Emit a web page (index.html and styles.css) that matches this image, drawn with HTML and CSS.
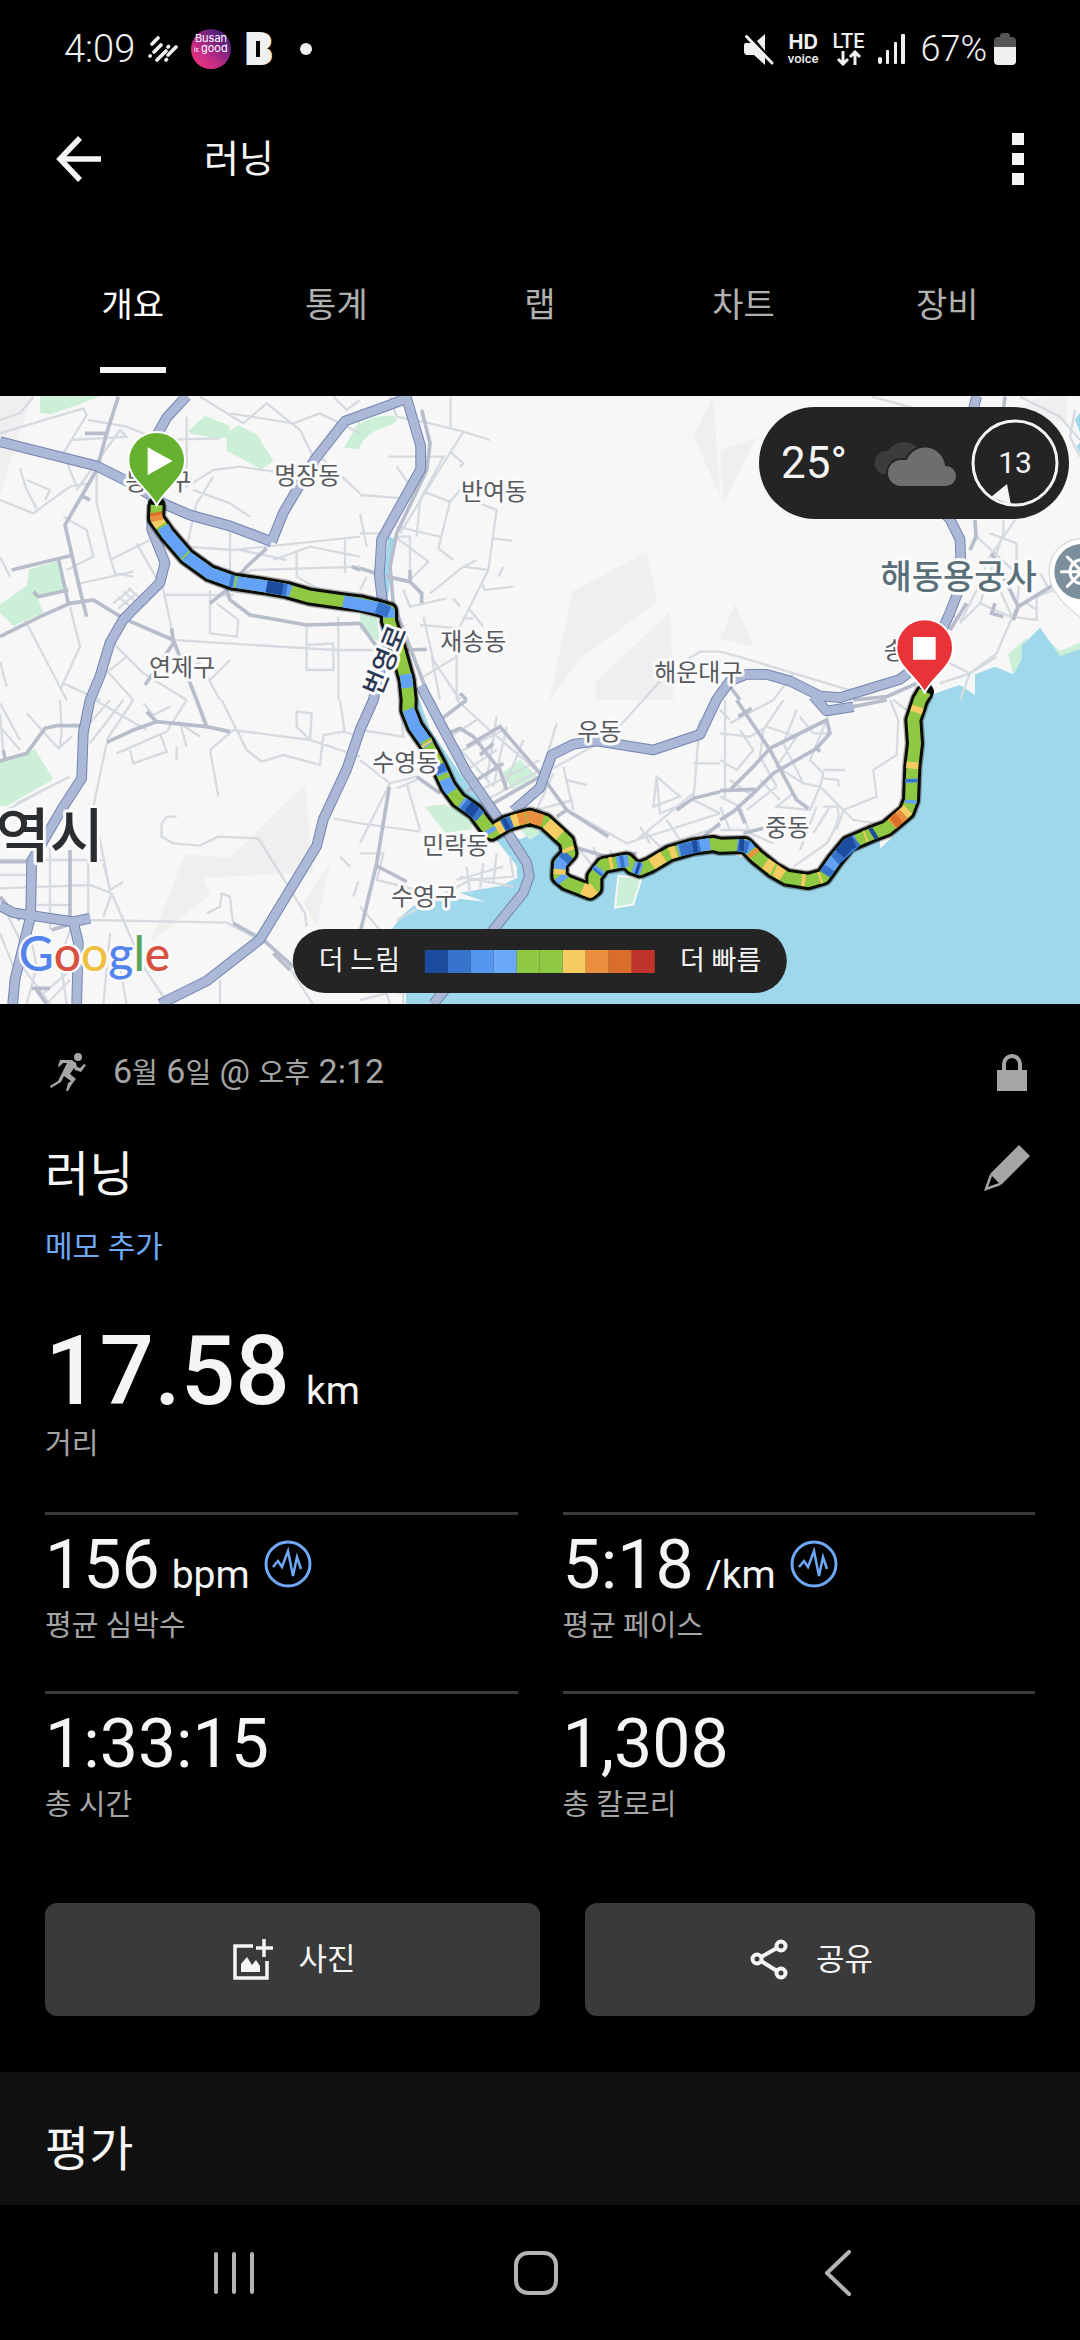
FILE: index.html
```html
<!DOCTYPE html>
<html lang="ko">
<head>
<meta charset="utf-8">
<meta name="viewport" content="width=device-width, initial-scale=1">
<title>러닝</title>
<link rel="stylesheet" href="styles.css">
</head>
<body>
<div class="status">
  <div class="status-side status-left">
    <span class="clock">4:09</span>
    <svg class="ic-dashes" viewBox="0 0 30 26" fill="none" stroke="#f0f0f0" stroke-width="3.6" stroke-linecap="round"><path d="M4 8L10 2M6 16L13 9M2 20L2.2 19.8M9 24L18 15M20 11L20.500 10.500M18 24L18.500 23.500M20 19L28 11"/></svg>
    <svg class="ic-busan" viewBox="0 0 40 40">
      <defs><linearGradient id="busan" x1="0.15" y1="0.85" x2="0.75" y2="0.2"><stop offset="0" stop-color="#ea3483"/><stop offset="0.4" stop-color="#bd2a83"/><stop offset="1" stop-color="#57207d"/></linearGradient></defs>
      <circle cx="20" cy="20" r="20" fill="url(#busan)"/>
      <text x="20" y="13" class="busan-text" text-anchor="middle">Busan</text>
      <text x="3" y="23" class="busan-small">is</text>
      <text x="10" y="23" class="busan-text">good</text>
    </svg>
    <svg class="ic-b" viewBox="0 0 32 38"><text x="0" y="35" class="b-text">B</text><rect x="7" y="5" width="14" height="27" fill="#f0f0f0"/><rect x="12" y="11" width="4" height="16" fill="#000"/></svg>
    <span class="dot"></span>
  </div>
  <div class="status-side">
    <svg class="ic-mute" viewBox="0 0 30 31" fill="#f0f0f0"><path d="M13 7L21 0V17ZM1 9H8L21 22V31L10 21H3Q0 21 0 17V11Z"/><path d="M2.500 2.500L28 29" stroke="#f0f0f0" stroke-width="3" stroke-linecap="round"/></svg>
    <span class="hd"><b>HD</b><small>voice</small></span>
    <span class="lte">LTE<svg viewBox="0 0 26 16" fill="none" stroke="#f0f0f0" stroke-width="3"><path d="M7 1V13M2 9L7 14L12 9M19 15V3M14 7L19 2L24 7"/></svg></span>
    <svg class="ic-signal" viewBox="0 0 28 31" fill="#f0f0f0"><rect x="0" y="23" width="4" height="7" rx="2"/><rect x="8" y="16" width="3" height="14" rx="1"/><rect x="16" y="8" width="3" height="22" rx="1"/><rect x="23" y="0" width="4" height="30" rx="1"/></svg>
    <span class="clock battery-level">67%</span>
    <svg class="ic-battery" viewBox="0 0 22 32"><path d="M6 3Q6 0 9 0H13Q16 0 16 3V4H19Q22 5 22 8V15H0V8Q0 5 3 4H6Z" fill="#555"/><path d="M0 14H22V28Q22 32 18 32H4Q0 32 0 28Z" fill="#f0f0f0"/></svg>
  </div>
</div>

<header class="appbar">
  <button class="icon-btn" aria-label="뒤로"><svg class="ic-back" viewBox="0 0 46 46" fill="none" stroke="#f5f5f5" stroke-width="5.500"><path d="M45 23H5M24 2L4 23L24 44"/></svg></button>
  <h1>러닝</h1>
  <button class="icon-btn" aria-label="더보기"><svg class="ic-more" viewBox="0 0 12 52" fill="#f5f5f5"><path d="M0 0H12V12H0ZM0 20H12V32H0ZM0 40H12V52H0Z"/></svg></button>
</header>

<nav class="tabs">
  <a class="tab active" href="#overview">개요</a>
  <a class="tab" href="#stats">통계</a>
  <a class="tab" href="#laps">랩</a>
  <a class="tab" href="#charts">차트</a>
  <a class="tab" href="#gear">장비</a>
</nav>

<main id="overview">
<section class="map">
<svg class="map-canvas" viewBox="0 0 3240 1824" preserveAspectRatio="xMidYMid slice">
  <defs>
    <g id="highways" fill="none" stroke-linejoin="round">
      <path d="M0 137L290 210L380 255L500 327L570 357L690 390L815 437M560 0L500 65L475 110L460 300L455 400L495 500L480 560L370 670L330 740L300 840L270 912L250 1010L245 1147L185 1240L95 1395L92 1560L45 1750L38 1824M815 437L850 350L945 190L1035 75L1160 30L1225 5"/>
      <path d="M1218 0L1262 150L1262 220L1145 430L1138 540L1150 640M1262 870L1320 980L1400 1130L1500 1275L1580 1400L1588 1440L1570 1490L1300 1824"/>
      <path d="M1540 1245L1620 1175L1655 1077L1720 1045L1790 1035L1960 1062L2100 1015L2150 910L2190 855L2240 835L2300 835L2370 855L2460 900L2520 905L2700 850L2790 780L2850 650L2885 560L2880 430L2850 370L2800 320M2930 0L2910 80"/>
      <path d="M1185 690L1150 780L1120 912L1080 1002L1040 1120L970 1270L950 1350L780 1630L620 1755L480 1824M0 1530L40 1550L220 1577L270 1567M220 1577L235 1640L230 1824M2440 900L2480 945L2560 932"/>
    </g>
    <path id="route" d="M470 327L468 367L500 412L560 482L630 532L700 557L790 570L860 582L930 602L1030 616L1080 622L1140 637L1167 645L1167 675L1195 762L1220 852L1226 912L1225 942L1245 992L1280 1042L1315 1107L1345 1172L1375 1212L1425 1247L1455 1287L1475 1310L1520 1282L1590 1262L1635 1277L1700 1337L1708 1372L1680 1402L1678 1442L1700 1460L1770 1487L1783 1477L1783 1442L1810 1407L1880 1394L1898 1412L1920 1420L1950 1407L2010 1372L2080 1352L2140 1344L2160 1349L2235 1347L2270 1382L2320 1422L2360 1445L2425 1455L2470 1442L2505 1392L2545 1344L2620 1312L2660 1297L2720 1247L2733 1212L2737 1112L2745 1042L2740 972L2760 912L2775 887"/>
  </defs>
  <rect width="3240" height="1824" fill="#f7f7f7"/>
  <!-- hills -->
  <g fill="#efefef">
    <path d="M1718 586L1940 468L1972 618L1740 788L1650 912H1648ZM1785 860L2010 648L2020 912H1790ZM2140 0L2080 118L2160 300ZM2160 162L2270 125L2170 325ZM2205 625L2262 750L2160 730ZM3040 40L3130 0H3200V80ZM0 0H100L60 100L0 300Z"/>
    <path d="M450 1640L555 1375L690 1385L915 1165L940 1430L610 1445L630 1495ZM990 1400L910 1520L950 1590Z"/>
  </g>
  <!-- parks -->
  <g fill="#ccefd8">
    <path d="M120 0H300L240 25L150 55L120 50ZM565 105L615 60L690 90L680 125L640 125L570 112ZM680 110L715 88L770 115L820 195L785 220L680 165ZM1032 155L1080 70V160ZM88 520L175 495L190 580L110 600L130 650L40 690L0 650L0 625L80 570ZM1080 85Q1120 55 1180 60Q1210 75 1150 95Q1100 110 1080 150Z"/>
    <path d="M0 1095L105 1060L160 1150L20 1230H0ZM1275 1232L1330 1225L1415 1260V1300L1335 1310ZM1508 1130L1560 1092L1610 1140L1535 1180ZM1080 655L1130 665L1140 740L1080 700ZM3024 775L3080 725L3100 790L3040 838ZM3110 700L3180 765L3240 740V790L3180 785Z"/>
  </g>
  <!-- sea and river -->
  <g fill="#a0d8eb">
    <path d="M3240 760L3180 780L3120 695L3065 750V790L3040 835L2985 812L2925 835V897L2880 867L2810 890L2770 915L2745 1000L2735 1240L2680 1320L2640 1358V1325L2560 1360L2470 1460L2350 1460L2235 1385L2140 1360L2060 1370L1950 1420L1870 1410L1820 1400L1790 1450L1770 1495L1680 1460L1680 1400L1700 1350L1630 1300L1560 1330L1500 1300L1480 1320L1550 1410L1552 1445L1500 1470L1380 1490L1455 1517L1350 1505L1260 1515L1210 1555L1175 1600L1218 1720V1824H3240Z"/>
    <path d="M1165 420L1185 430L1172 540L1160 640L1150 560ZM1240 860L1290 1000L1400 1160L1500 1290L1480 1320L1400 1230L1330 1130L1280 1010L1240 930ZM3225 70L3240 50V110ZM3230 150L3240 140V170Z"/>
  </g>
  <path d="M1855 1440L1925 1445L1900 1525L1845 1535Z" fill="#ccefd8" stroke="#f7f7f7" stroke-width="6"/>
  <path d="M1560 1300L1600 1290L1620 1312L1590 1332Z" fill="#ccefd8"/>
  <!-- side streets -->
  <g class="minor">
    <g transform="translate(0 -18)">
      <path d="M0 90L60 70L100 20M0 130L250 55L260 75L190 190L230 290M215 150L380 140L360 120L230 300M265 90L380 110L480 150L660 145M290 245L290 340L330 500L345 550L400 560M60 235L80 300L110 355M0 330L100 370L210 290L270 280M135 330L150 300L80 270M560 80V290L640 240L720 230L820 245M690 70L880 100L960 70L1080 130M600 20L730 100L800 40L900 120L960 240M1000 20L1040 60L1080 30M640 260L590 340L560 470L700 480L1080 440M750 380L690 340L580 300M690 420V560L760 540L1080 530M820 510L930 470L1080 500M960 200L1080 310M720 480L860 510M330 510L450 450M410 460L490 600L520 740M240 580L400 545M495 615H700M0 500L30 560M75 690L200 930M210 650L240 770L180 900M190 880L300 930M340 760L430 850L560 930M310 830L400 930M280 880L380 800M520 750L1000 780H1080M630 600V730L710 740L715 690L650 640M920 710V840H1000V760L925 765M1015 680V930M0 815L20 890M630 870L690 810M890 480V560L960 600M1035 450V550"/>
      <path d="M355 620L410 665M370 605L425 650M385 595L440 640M340 640L395 595M355 655L410 610M370 670L425 625M520 840L600 820L660 930M190 380L260 420L280 500L200 540"/>
    </g>
    <g transform="translate(1080 -18)">
      <path d="M90 20L110 80L210 100L310 125L390 150M272 20V110M310 125L200 300L120 430M270 185L310 220L300 230M85 200H250L180 330L170 440M110 230L160 300M0 315L130 325M190 305L270 335L235 475L280 510M270 335L300 300M110 410L240 440M100 440H150V550M105 440L205 515L150 570M210 610L310 530L350 510M310 530L385 540L410 360L360 340M400 445L455 452M385 540L300 710M365 580L375 600L460 590M430 530L415 560M130 600L150 650L260 625M280 625L300 650M330 660L370 710M305 685H340M180 705L300 715M0 370L20 470M0 430H60M190 680L220 810L300 930M190 860L290 800M0 780H60M215 800L240 930M290 790V930M0 600L20 560"/>
      <path d="M850 930L930 840L1020 785L1080 785"/>
    </g>
    <g transform="translate(2160 -18)">
      <path d="M455 20L640 70L760 90M900 20L1020 80L1080 150M1065 60L1050 140L1080 200M850 390V430L780 640L730 690L700 680M810 430L890 460L890 520M770 440L900 560L890 650M885 390L810 500L770 600L720 700M780 640L870 680L950 690V620L1080 570M890 650L830 790L750 850L720 930M660 880L750 850L830 800M690 820L750 850M0 785L40 795L420 910M220 850L160 930M960 550L990 600M840 600L880 690M920 640L950 660"/>
    </g>
    <g transform="translate(0 912)">
      <path d="M180 0L185 90L180 145M80 40L175 145L215 110M0 40L10 160M0 80L60 150M285 0L440 90M400 0L320 120M370 0L270 130M330 0L260 80M430 10L460 45L510 20M320 130L280 320L330 570M350 160L500 95L560 0M390 150L400 190L500 155L480 100M530 180V140M560 140L540 70L600 110M700 90L930 120L1080 170M665 0L740 150L785 185L850 165L960 195L970 105L1030 95L1080 110M930 120L935 40L890 35V80L930 120M1020 0L1035 100M655 290L630 150L700 90M530 350H500L485 370V410L520 430L600 437L655 410L775 415L915 640L920 680M1000 355L1080 370M0 480H310M0 525H90M0 565L270 555L335 580L310 650M150 440V690M110 615H210M265 480V650M310 490L330 570L370 545M335 580L430 800L490 890M270 660L680 668L780 720M665 580L660 620L620 640M665 580L690 590L695 640L700 670M860 790L950 930M660 840V930M0 600L60 720M0 700L40 800M90 700L110 800L80 912M330 700L310 912M360 800L380 912M60 790L150 912M130 880L200 820M140 912L210 840M1020 470L1050 500M1075 545L1060 590M0 10L60 120M210 230L50 310M150 260L20 330M210 690L180 780L200 912"/>
    </g>
    <g transform="translate(1080 912)">
      <path d="M0 90L130 110L120 0M0 180L90 250L170 230M90 250L0 430M110 265L170 240M0 370L180 395M140 250L180 390M0 460H70L50 540L170 570M60 690L0 620M110 660L330 540L460 530L450 470M290 540L430 500M330 580L320 500M360 570L370 490M400 550L410 460M300 530L460 560M200 20L260 100L390 250M290 0L400 100L540 220M270 110L350 60M290 160L430 90M320 210L410 150M360 270L540 180M380 300L540 210M410 50L380 240M440 80L400 260M490 120L430 270M590 70L560 170M850 0L750 110L580 205M610 200L640 330M680 255L620 240M580 220L530 330L640 300M890 230L960 290L880 320ZM890 230L900 340L1000 300M1020 60L1000 300L1080 340M1000 190H1080M640 340L800 430L1080 340M830 420L1000 280M660 450L700 500L800 480M700 440L720 500M750 450L770 500M860 400L900 440L1080 380M840 380L870 430M920 360L960 420"/>
      <path d="M0 900L80 880L90 912M20 860L130 880V912"/>
    </g>
    <g transform="translate(2160 912)">
      <path d="M0 100L90 110L140 80L230 110L170 200L250 250L300 260L270 330L170 320L220 280M15 0V300M30 70L160 0M190 0L130 90L120 170L170 260M230 30L190 130L250 250M60 90L100 150L50 210L0 180M0 30L30 60M240 50L280 100H330M320 60L270 180L310 220L300 260L370 330L350 390M310 210H375M310 235L355 240V260M370 330L470 290L460 210L530 165L535 60L510 0M370 330L400 360L500 375M120 240L180 300M0 290L60 320L90 400L160 430M30 240L100 290M0 320L30 390M290 320L240 450M330 320L280 400M350 320Q370 350 320 430L220 500M310 320H360M170 260L80 330M520 0L560 30M0 390L80 390"/>
    </g>
  </g>
  <!-- arterial roads -->
  <g class="arterial">
    <g transform="translate(0 -18)"><path d="M355 20L320 130L290 240L195 405L240 600L260 680M255 130H325M0 740L120 680L210 640L280 630L370 685L520 750L590 930M35 540L220 495M175 505L205 640M100 605L115 620L205 600M800 475L740 530L680 600L630 640M680 600L690 630L750 675L920 705L1080 700M435 885L520 760L515 715M1055 530L1080 540M250 320L270 330"/></g>
    <g transform="translate(1080 -18)"><path d="M185 60L210 160L200 240L110 430L90 530L100 640L210 930M0 535L80 560L150 575L185 610V640M150 540V575M0 700L50 770M140 780L200 778M300 910L320 930"/></g>
    <g transform="translate(2160 -18)"><path d="M855 20L850 60M765 390L768 440L750 480M815 490L895 650L1000 585M895 650L880 690M825 640L815 670L850 680M740 640L690 720M590 880L500 920L400 930M30 890L60 930M1080 550L1000 585"/></g>
    <g transform="translate(0 912)"><path d="M0 183L80 160L135 85L170 77H250M320 127L400 90L470 65L620 80L690 95M590 0L620 80M440 35L470 65M10 150L15 175M0 485H80M210 450V650M700 670L790 720L880 800M0 590L60 660M155 690L220 670M95 865H150M110 870L140 912M820 760L870 810M50 420L60 440"/></g>
    <g transform="translate(1080 912)"><path d="M0 700L50 490L88 260M45 495L140 545M170 230L240 280M240 60L320 0M265 100L300 85L340 110L420 210L440 270M320 140L420 80L540 220L620 330L745 410M360 165L400 130M350 240L430 190M320 275L350 255M400 310L540 230M620 330L590 350M640 440L740 470L830 460M950 330L1000 295L1080 275M1030 410L1080 370"/></g>
    <g transform="translate(2160 912)"><path d="M50 0L150 150L230 300L265 325M0 360L40 335L100 280L160 220L290 145L330 100L320 60L150 145L100 200L30 270M0 272L105 268M55 50L95 25M55 325L75 370M300 155L290 145M400 20L500 0M70 400L130 385"/></g>
  </g>
  <use href="#highways" class="highway-edge"/>
  <use href="#highways" class="highway"/>
  <!-- route, coloured by pace -->
  <use href="#route" class="route-halo"/>
  <use href="#route" class="route-edge"/>
  <use href="#route" class="route"/>
  <g class="pace">
    <path class="c-mid" d="M489 392L500 412L560 482L630 532L700 557L790 570L860 582L872 586M1030 616L1140 637L1167 648V665M1217 835L1222 875M1225 940L1245 992L1285 1048M1315 1107L1345 1172L1355 1187M1385 1218L1425 1247L1440 1262M1468 1298L1475 1310M1508 1290L1535 1276M1702 1378L1682 1402L1679 1420M1678 1440L1690 1455M1790 1430L1800 1417M1850 1399L1885 1394M1900 1412L1925 1420M2035 1364L2080 1352L2130 1344M2212 1347L2240 1350L2252 1364M2480 1428L2505 1392L2545 1344L2570 1334M2735 1160L2734 1148M2732 1222L2733 1212"/>
    <path class="c-deep" d="M700 557L690 555M860 582L848 580M1130 634L1167 648M1315 1107L1325 1130M1392 1223L1440 1262M1508 1290L1535 1276M1705 1375L1690 1392M1790 1430L1795 1424M1860 1397L1872 1395M2040 1363L2100 1350M2215 1347L2245 1355M2475 1435L2488 1415M2505 1392L2570 1334M2735 1159V1149"/>
    <path class="c-navy" d="M800 571L848 580M1404 1231L1428 1249M1512 1287L1524 1281M1909 1416L1918 1419M2078 1352L2092 1350M2218 1347L2232 1347M2520 1374L2545 1344L2562 1337M2615 1316L2626 1309"/>
    <path class="c-yellow" d="M468 367L482 388M1278 1040L1282 1046M1490 1300L1508 1290M1536 1276L1555 1270M1640 1282L1680 1318M1702 1355L1707 1366M1679 1420L1678 1435M1748 1478L1770 1487L1783 1477M1828 1402L1838 1400M1955 1405L1990 1382M2010 1372L2028 1366M2296 1402L2348 1438M2405 1452L2416 1453M2458 1446L2464 1444M2594 1322L2599 1320M2676 1284L2724 1240M2748 950L2754 932M2736 1118L2738 1098"/>
    <path class="c-orange" d="M468 355L472 374M1555 1270L1590 1262L1628 1274M2676 1284L2712 1254M2256 1366L2264 1376"/>
    <path class="c-red" d="M467 349L469 358M2680 1280L2698 1266"/>
    <path class="c-green" d="M554 476L558 480M704 557L710 558M1578 1265L1581 1264M1277 1032L1280 1038M1328 1135L1334 1150M2318 1421L2324 1424M1810 1407L1820 1404M2770 898L2775 887"/>
  </g>
  <!-- place names -->
  <g class="place" text-anchor="middle">
    <text x="475" y="283">동래구</text><text x="922" y="263">명장동</text><text x="546" y="840">연제구</text>
    <text x="1482" y="312">반여동</text><text x="1420" y="763">재송동</text><text x="2095" y="856">해운대구</text>
    <text x="2750" y="789">송정동</text><text x="1216" y="1126">수영동</text><text x="1366" y="1375">민락동</text>
    <text x="1272" y="1528">수영구</text><text x="1798" y="1033">우동</text><text x="2362" y="1321">중동</text>
  </g>
  <text class="city" x="312" y="1382" text-anchor="end">역시</text>
  <text class="landmark" x="2876" y="580" text-anchor="middle">해동용궁사</text>
  <text class="road-name" x="1190" y="838" text-anchor="middle" transform="rotate(-68 1160 828)">번영로</text>
  <text class="logo" x="56" y="1724"><tspan fill="#5383ec">G</tspan><tspan fill="#d85140">o</tspan><tspan fill="#f1bf42">o</tspan><tspan fill="#5383ec">g</tspan><tspan fill="#58a55c">l</tspan><tspan fill="#d85140">e</tspan></text>
  <!-- temple marker -->
  <g transform="translate(3246 527)">
    <path d="M-99 0A99 99 0 0 1 99 0Q99 70 0 140Q-99 70 -99 0Z" fill="#fff" stroke="#d9dcde" stroke-width="4"/>
    <circle r="83" fill="#7b909c"/>
    <g fill="none" stroke="#fff" stroke-width="9"><circle r="36"/><circle r="11"/><path d="M-62 0H62M0 -62V62M-44 -44L44 44M44 -44L-44 44" stroke-linecap="round"/></g>
  </g>
  <!-- start and finish pins -->
  <g stroke="#fff" stroke-width="6">
    <path d="M470 328C442 275 385 250 385 193A85 85 0 0 1 555 193C555 250 498 275 470 328Z" fill="#67b131"/>
    <path d="M2774 890C2746 837 2689 812 2689 755A85 85 0 0 1 2859 755C2859 812 2802 837 2774 890Z" fill="#e93339"/>
  </g>
  <path d="M443 154V237L518 195ZM2739 723H2807V791H2739Z" fill="#fff"/>
</svg>

<div class="weather">
  <span class="temp">25°</span>
  <svg class="ic-cloud" viewBox="0 0 88 48"><path d="M12 35A12 12 0 0 1 15 12H18A19 19 0 0 1 50 12L40 34Z" fill="#3c3c3c"/><path d="M31 48A14 14 0 0 1 31 20H36A21 21 0 0 1 76 26A11 11 0 0 1 76 48Z" fill="#6e6e6e" stroke="#242424" stroke-width="2"/></svg>
  <span class="wind"><svg viewBox="0 0 88 88"><circle cx="44" cy="44" r="42" fill="none" stroke="#f5f5f5" stroke-width="3"/><path d="M20 78L36 65L40 86Z" fill="#f5f5f5"/></svg><span>13</span></span>
</div>

<div class="legend">
  <span>더 느림</span>
  <span class="scale"><i class="b-navy"></i><i class="b-deep"></i><i class="b-mid"></i><i class="b-light"></i><i class="b-green"></i><i class="b-green"></i><i class="b-yellow"></i><i class="b-orange"></i><i class="b-rust"></i><i class="b-red"></i></span>
  <span>더 빠름</span>
</div>
</section>

<section class="activity">
  <div class="row meta">
    <svg class="ic-run" viewBox="0 0 36 38" fill="#a5a5a5"><circle cx="28" cy="4" r="4"/><path d="M10 7L22 7L26 10L27 14L30 15L34 11L36 12L31 19L25 17L24 15L20 21L26 26L22 31L18 38H16L18 30L21 28L14 23L11 29L1 35L0 33L8 28L13 18L17 10L13 10L9 14L8 13Z"/></svg>
    <span class="date">6<span class="ko">월</span> 6<span class="ko">일</span> @ <span class="ko">오후</span> 2:12</span>
    <button class="icon-btn" aria-label="비공개"><svg class="ic-lock" viewBox="0 0 30 38"><path d="M7 18V11A8 8 0 0 1 23 11V18" fill="none" stroke="#a5a5a5" stroke-width="4"/><rect y="17" width="30" height="21" fill="#a5a5a5"/></svg></button>
  </div>
  <div class="row title-row">
    <h2>러닝</h2>
    <button class="icon-btn" aria-label="편집"><svg class="ic-pencil" viewBox="0 0 46 46" fill="#a5a5a5"><path d="M35 0L46 11L17 40L6 29Z"/><path d="M7 30L2 44L16 39" fill="none" stroke="#a5a5a5" stroke-width="2.500"/></svg></button>
  </div>
  <a class="memo" href="#memo">메모 추가</a>

  <div class="distance"><strong>17.58</strong><span class="unit">km</span></div>
  <div class="label">거리</div>

  <div class="stats">
    <div class="stat"><div class="value">156 <span class="unit">bpm</span><svg class="ic-pulse" viewBox="0 0 48 48" fill="none" stroke="#6fa8f6"><circle cx="24" cy="24" r="22" stroke-width="3"/><path d="M9 27L14 21L18 27L24 11L29 36L33 17L37 29" stroke-width="2.500"/></svg></div><div class="label">평균 심박수</div></div>
    <div class="stat"><div class="value">5:18 <span class="unit">/km</span><svg class="ic-pulse" viewBox="0 0 48 48" fill="none" stroke="#6fa8f6"><circle cx="24" cy="24" r="22" stroke-width="3"/><path d="M9 27L14 21L18 27L24 11L29 36L33 17L37 29" stroke-width="2.500"/></svg></div><div class="label">평균 페이스</div></div>
    <div class="stat"><div class="value">1:33:15</div><div class="label">총 시간</div></div>
    <div class="stat"><div class="value">1,308</div><div class="label">총 칼로리</div></div>
  </div>

  <div class="actions">
    <button class="action"><svg viewBox="0 0 45 45" fill="none" stroke="#f5f5f5" stroke-width="3.500"><path d="M24 9H6V41H38V24M35 2V20M27 11H44"/><path d="M12 35V27L18 20L23 28L27 23L31 29V35Z" fill="#f5f5f5" stroke="none"/></svg>사진</button>
    <button class="action"><svg viewBox="0 0 45 45" fill="none" stroke="#f5f5f5" stroke-width="4"><circle cx="10" cy="22" r="4.500"/><circle cx="34" cy="9" r="4.500"/><circle cx="34" cy="36" r="4.500"/><path d="M14 20L30 11M14 24L30 34"/></svg>공유</button>
  </div>
</section>

<section class="rating"><h2>평가</h2></section>
</main>

<footer class="navbar">
  <button class="icon-btn" aria-label="최근 앱"><svg viewBox="0 0 46 46" fill="none" stroke="#b3b3b3" stroke-width="4" stroke-linecap="round"><path d="M5 4V42M23 4V42M41 4V42"/></svg></button>
  <button class="icon-btn" aria-label="홈"><svg viewBox="0 0 46 46" fill="none" stroke="#b3b3b3" stroke-width="4"><rect x="3" y="3" width="40" height="40" rx="12"/></svg></button>
  <button class="icon-btn" aria-label="뒤로 가기"><svg viewBox="0 0 46 46" fill="none" stroke="#b3b3b3" stroke-width="4" stroke-linecap="round" stroke-linejoin="round"><path d="M34 2L12 23L34 44"/></svg></button>
</footer>
</body>
</html>
```
FILE: styles.css
```css
* { box-sizing: border-box; }
body {
  margin: 0;
  background: #000;
  color: #f5f5f5;
  font-family: Roboto, "Noto Sans CJK KR", sans-serif;
}
svg { display: block; }
h1, h2 { margin: 0; font-weight: 400; }
button { font: inherit; color: inherit; border: 0; cursor: pointer; }
a { text-decoration: none; }
.icon-btn { background: none; padding: 0; display: flex; align-items: center; justify-content: center; }

/* status bar */
.status { display: flex; justify-content: space-between; align-items: center; height: 98px; padding: 0 64px; color: #f0f0f0; }
.status-side { display: flex; align-items: center; gap: 14px; }
.status-left { gap: 13px; }
.clock { font-size: 38px; line-height: 48px; font-weight: 300; }
.battery-level { font-size: 36px; }
.ic-dashes { width: 30px; height: 26px; }
.ic-busan { width: 40px; height: 40px; }
.busan-text { font-size: 11px; font-family: Inter, sans-serif; fill: #fff; }
.busan-small { font-size: 6px; font-family: Inter, sans-serif; fill: #fff; }
.ic-b { width: 32px; height: 38px; }
.b-text { font-size: 46px; font-weight: 900; fill: #f0f0f0; }
.dot { width: 12px; height: 12px; border-radius: 50%; background: #f0f0f0; margin-left: 11px; }
.ic-mute { width: 30px; height: 31px; }
.hd { display: flex; flex-direction: column; align-items: center; }
.hd b { font-family: Inter, sans-serif; font-size: 20px; line-height: 20px; }
.hd small { font-size: 13px; line-height: 14px; font-weight: 500; }
.lte { display: flex; flex-direction: column; align-items: center; font-size: 20px; line-height: 18px; font-weight: 500; }
.lte svg { width: 26px; height: 16px; }
.ic-signal { width: 28px; height: 31px; }
.ic-battery { width: 22px; height: 32px; margin-left: -7px; }

/* app bar and tabs */
.appbar { display: flex; align-items: center; height: 122px; padding: 0 56px; }
.appbar h1 { flex: 1; margin-left: 102px; font-size: 38px; line-height: 50px; }
.ic-back { width: 46px; height: 46px; }
.ic-more { width: 12px; height: 52px; }
.tabs { display: flex; justify-content: space-around; padding: 60px 31px 23px; }
.tab { flex: 1; display: flex; flex-direction: column; align-items: center; font-size: 34px; line-height: 50px; color: #b0b0b0; }
.tab::after { content: ""; width: 66px; height: 6px; margin-top: 37px; }
.tab.active { color: #fff; }
.tab.active::after { background: #f5f5f5; }

/* map */
.map { position: relative; }
.map-canvas { width: 100%; height: auto; }
.minor { fill: none; stroke: #d5dbe1; stroke-width: 7; }
.arterial { fill: none; stroke: #b7bdcb; stroke-width: 11; }
.highway-edge { stroke: #7384b1; stroke-width: 32; }
.highway { stroke: #abb9d7; stroke-width: 26; }
.route-halo, .route-edge, .route { fill: none; stroke-linejoin: round; }
.route-halo { stroke: rgba(0, 0, 0, 0.3); stroke-width: 62; }
.route-edge { stroke: #0b0d05; stroke-width: 54; stroke-linecap: round; }
.route { stroke: #8fc843; stroke-width: 36; }
.pace { fill: none; stroke-width: 36; stroke-linejoin: round; }
.c-green { stroke: #8fc843; }
.c-mid { stroke: #63a2f6; }
.c-deep { stroke: #3773cb; }
.c-navy { stroke: #1d4b9e; }
.c-yellow { stroke: #f4cc62; }
.c-orange { stroke: #ea8f40; }
.c-red { stroke: #d96d2a; }
.place, .city, .landmark, .road-name { font-family: "Noto Sans CJK KR", sans-serif; paint-order: stroke; stroke: #fafafa; stroke-width: 18; stroke-linejoin: round; }
.place { font-size: 72px; fill: #565a5e; }
.city { font-size: 177px; font-weight: 500; fill: #2b2e31; }
.landmark { font-size: 102px; font-weight: 500; fill: #5a6f79; }
.road-name { font-size: 78px; font-weight: 500; fill: #2c3754; }
.logo { font-family: Lato, sans-serif; font-size: 144px; font-weight: 500; paint-order: stroke; stroke: #fafafa; stroke-width: 14; stroke-linejoin: round; }

.weather { position: absolute; top: 11px; right: 11px; display: flex; align-items: center; justify-content: space-between; width: 310px; height: 112px; padding: 0 10px 0 22px; border-radius: 56px; background: #242424; }
.temp { font-size: 44px; line-height: 52px; }
.ic-cloud { width: 88px; height: 48px; margin-left: 10px; }
.wind { display: grid; place-items: center; }
.wind > * { grid-area: 1 / 1; }
.wind svg { width: 88px; height: 88px; }
.wind span { font-size: 30px; line-height: 36px; }

.legend { position: absolute; bottom: 11px; left: 50%; transform: translateX(-50%); display: flex; align-items: center; gap: 25px; height: 64px; padding: 0 26px; border-radius: 32px; background: #242424; font-size: 27px; line-height: 40px; white-space: nowrap; }
.scale { display: flex; }
.scale i { width: 23px; height: 23px; }
.b-navy { background: #1d4b9e; }
.b-deep { background: #3773cb; }
.b-mid { background: #5596ef; }
.b-light { background: #6aa8fa; }
.b-green { background: #8fc843; }
.b-yellow { background: #f4cc62; }
.b-orange { background: #ea8f40; }
.b-rust { background: #d96d2a; }
.b-red { background: #c0342c; }

/* activity */
.activity { padding: 43px 45px 56px; }
.row { display: flex; align-items: center; justify-content: space-between; }
.meta { height: 50px; gap: 27px; padding: 0 8px 0 5px; }
.date { flex: 1; font-size: 34px; line-height: 50px; color: #a5a5a5; }
.ko { font-size: 28px; }
.ic-run { width: 36px; height: 38px; }
.ic-lock { width: 30px; height: 38px; }
.ic-pencil { width: 46px; height: 46px; }
.title-row { align-items: flex-start; margin-top: 48px; padding: 0 5px 0 0; }
.activity h2, .rating h2 { font-size: 48px; line-height: 60px; }
.memo { display: block; margin-top: 22px; font-size: 30px; line-height: 40px; color: #6fa8f6; }
.distance { display: flex; align-items: baseline; gap: 16px; margin-top: 54px; }
.distance strong { font-size: 96px; line-height: 100px; font-weight: 500; }
.unit { font-size: 39px; line-height: 40px; }
.label { margin-top: 3px; font-size: 29px; line-height: 40px; color: #a5a5a5; }
.stats { display: grid; grid-template-columns: 1fr 1fr; gap: 45px; margin-top: 48px; }
.stat { border-top: 3px solid #3a3a3a; padding-top: 12px; }
.value { display: flex; align-items: baseline; gap: 12px; font-size: 68px; line-height: 76px; }
.ic-pulse { width: 48px; height: 48px; }
.value .ic-pulse { margin-left: 2px; }
.actions { display: grid; grid-template-columns: 11fr 10fr; gap: 45px; margin-top: 78px; }
.action { display: flex; align-items: center; justify-content: center; gap: 24px; height: 113px; padding: 0; border-radius: 12px; background: #3a3a3a; font-size: 31px; line-height: 40px; }
.action svg { width: 45px; height: 45px; }

.rating { padding: 48px 45px 25px; background: #101010; }

/* system navigation */
.navbar { display: flex; align-items: center; justify-content: center; gap: 256px; height: 135px; padding-right: 8px; }
.navbar svg { width: 46px; height: 46px; }
```
